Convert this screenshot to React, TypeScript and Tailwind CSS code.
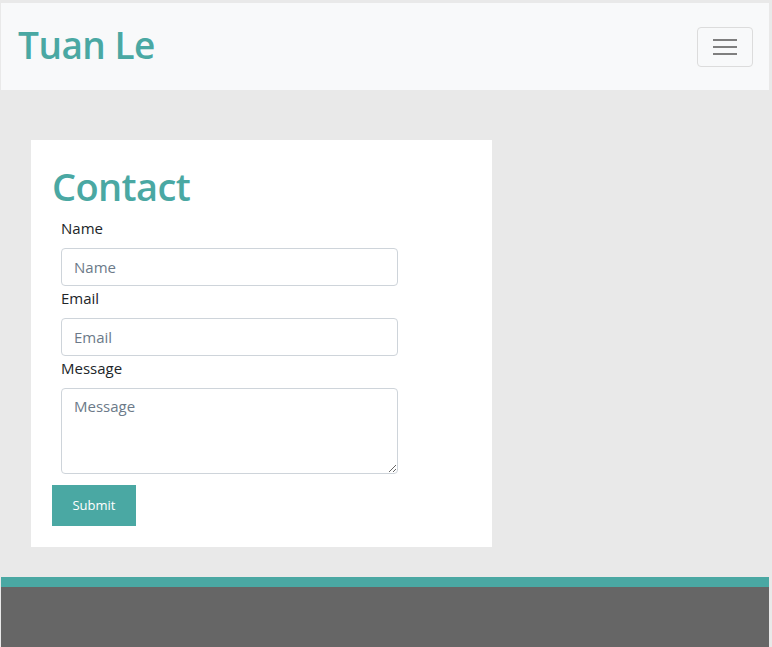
export default function App() {
  const teal = '#4aa8a3';
  const fields = [
    { label: 'Name', placeholder: 'Name', type: 'text' },
    { label: 'Email', placeholder: 'Email', type: 'email' }
  ];

  return (
    <div
      className="min-h-[647px] bg-[#e9e9e9] pt-[3px] pl-px pr-[3px] flex flex-col"
      style={{ fontFamily: '"Open Sans", "Noto Sans", sans-serif' }}
    >
      {/* Navbar */}
      <nav className="h-[87px] bg-[#f8f9fa] flex items-start justify-between pl-[17px] pr-4">
        <h1 className="mt-[18px] text-[37px] leading-[48px] font-semibold text-[#4aa8a3] tracking-[-0.5px]">
          Tuan Le
        </h1>
        <button className="mt-6 w-[56px] h-[40px] rounded border border-[#dcdcdc] flex flex-col items-center justify-center gap-[5px]">
          <span className="block w-6 h-[2px] bg-[#7f7f7f]" />
          <span className="block w-6 h-[2px] bg-[#7f7f7f]" />
          <span className="block w-6 h-[2px] bg-[#7f7f7f]" />
        </button>
      </nav>

      {/* Main */}
      <main className="flex-1 pt-[50px] pb-[30px] pl-[30px]">
        <div className="w-[461px] bg-white pl-[21px] pt-[22px] pb-[21px]">
          <h2 className="text-[38px] leading-[48px] font-semibold text-[#4aa8a3] tracking-[-0.6px] mb-[6px]">
            Contact
          </h2>
          <form className="pl-[9px] w-[346px]">
            {fields.map((f, i) => (
              <div key={i} className="flex flex-col">
                <label className="text-[15px] leading-[24px] text-[#212529]">{f.label}</label>
                <input
                  type={f.type}
                  placeholder={f.placeholder}
                  className="mt-[8px] h-[38px] w-[337px] rounded border border-[#ced4da] px-3 text-[15px] text-[#495057] placeholder:text-[#6c7a89] outline-none"
                />
              </div>
            ))}
            <div className="flex flex-col">
              <label className="text-[15px] leading-[24px] text-[#212529]">Message</label>
              <textarea
                placeholder="Message"
                className="mt-[8px] h-[86px] w-[337px] rounded border border-[#ced4da] px-3 py-[6px] text-[15px] text-[#495057] placeholder:text-[#6c7a89] outline-none"
              />
            </div>
          </form>
          <button
            className="mt-[11px] w-[84px] h-[41px] text-white text-[13px]"
            style={{ backgroundColor: teal }}
          >
            Submit
          </button>
        </div>
      </main>

      {/* Footer */}
      <div className="h-[10px] bg-[#4aa8a3]" />
      <footer className="h-[60px] bg-[#666666]" />
    </div>
  );
}
